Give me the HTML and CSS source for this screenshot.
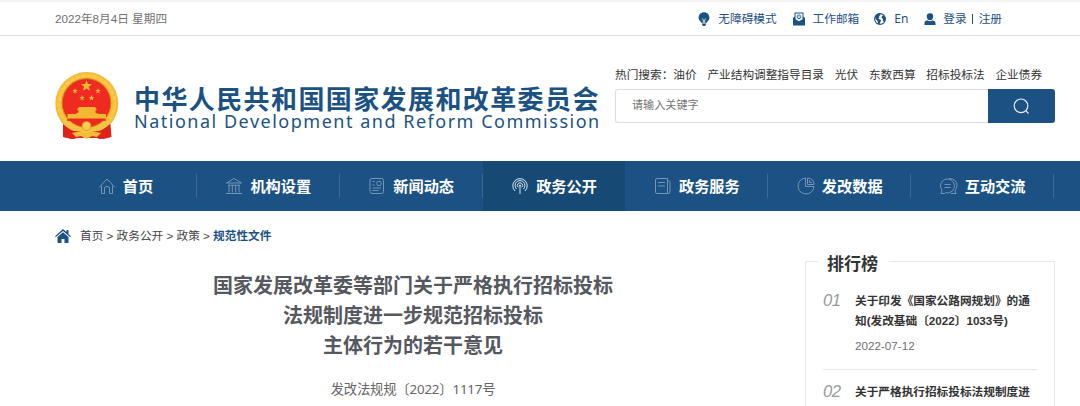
FILE: index.html
```html
<!DOCTYPE html>
<html lang="zh-CN">
<head>
<meta charset="utf-8">
<title>国家发展和改革委员会</title>
<link rel="stylesheet" href="styles.css">
</head>
<body>
<div class="topbar">
  <div class="wrap topbar-row">
    <span class="date">2022年8月4日 星期四</span>
    <div class="tools">
      <a class="tool t-bulb"><svg width="12" height="14" viewBox="0 0 12 14"><path fill="currentColor" d="M6 .3a5.300 5.300 0 0 0-3 9.700l.6 1h4.800l.6-1A5.300 5.300 0 0 0 6 .3zM4 11.500h4v1L7 14H5l-1-1.500z"/><path d="M4.300 6.500 5.300 8v3M7.700 6.500 6.700 8v3" fill="none" stroke="#fff" stroke-width=".8"/></svg><span>无障碍模式</span></a>
      <a class="tool t-mail"><svg width="14" height="14" viewBox="0 0 14 14"><path fill="currentColor" d="M2.500.5h9v4l1.500 1.500v7.500H1V6l1.500-1.500z"/><path fill="#fff" d="M3.500 1.500h7v5.700L7 9.200 3.500 7.200z"/><circle cx="7" cy="4.800" r="1.900" fill="none" stroke="currentColor" stroke-width=".9"/><circle cx="7" cy="4.800" r=".6" fill="currentColor"/></svg><span>工作邮箱</span></a>
      <a class="tool t-globe"><svg width="12" height="12" viewBox="0 0 12 12"><circle cx="6" cy="6" r="5.400" fill="#fff" stroke="currentColor" stroke-width="1.100"/><path fill="currentColor" d="M1 3.500 3.500.8 6 .5l.5 1.300L5 3.200l.6 1.300L4 5.300l1.500 1 1.500.7-.3 1.600L5.500 11 4 11 3.600 8 1.500 6zM8 3l2-.8 1.400 3-.2 2L10 9 8.800 7.500 9 6 7.500 4.800z"/></svg><span>En</span></a>
      <a class="tool t-user"><svg width="12" height="12" viewBox="0 0 12 12"><path fill="currentColor" d="M6 .2a3.200 3.200 0 0 1 3.200 3.300C9.200 5.500 8 7.300 6 7.300S2.800 5.500 2.800 3.500A3.200 3.200 0 0 1 6 .2zM.5 12V9.500Q.5 8 3.500 7.300 6 9.200 8.500 7.300q3 .7 3 2.200V12z"/></svg><span>登录<i class="bar"></i>注册</span></a>
    </div>
  </div>
</div>

<header class="wrap header">
  <svg class="emblem" width="65" height="70" viewBox="0 0 65 70">
    <defs><path id="star" d="M0-1 .235-.324.951-.309.38.124.588.809 0 .4-.588.809-.38.124-.951-.309-.235-.324z"/></defs>
    <path fill="#dc241c" d="M10 48 8.500 66l8 2 7-1h18l7 1 8-2L55 48z"/>
    <path d="m11 57 2 9M17 60v7M54 57l-2 9M48 60v7" stroke="#a91a12" fill="none"/>
    <circle cx="31.800" cy="32.500" r="31.500" fill="#f4bb35"/>
    <circle cx="31.800" cy="32.500" r="28" fill="none" stroke="#f8c94d" stroke-width="3" stroke-dasharray="5 1"/>
    <circle cx="31.500" cy="32" r="24.300" fill="#ee2a22" stroke="#c77d17" stroke-width="1"/>
    <g fill="#f3b832">
      <use href="#star" transform="translate(31.500 15) scale(6)"/>
      <use href="#star" transform="translate(20 20) scale(3)"/>
      <use href="#star" transform="translate(43 20) scale(3)"/>
      <use href="#star" transform="translate(27 27) scale(3)"/>
      <use href="#star" transform="translate(36.500 27) scale(3)"/>
      <path d="M24 36h16l2 2.500-1.500 1V42l2.500.5V43h8v4.500H12.500V43h9v-1l2-.5v-2L22 38.500z"/>
    </g>
    <path d="M12 49h39" stroke="#ee2a22" stroke-width="1.500"/>
    <path d="M14 50q5 7 17.500 7T49 50l5 4q-9 8-22.500 8T9 54z" fill="#f6c443"/>
    <path d="M8 53q9 9 18 7l-7 8-11-2zM55 53q-9 9-18 7l7 8 11-2z" fill="#e02119"/>
    <circle cx="31.500" cy="55" r="4.500" fill="#f8cd50" stroke="#d39121" stroke-width=".8"/>
    <path d="m17 62 9-2 5.500 3 5.500-3 9 2-4 4-5-1-5.500 3-5.500-3-5 1z" fill="#f3bd39"/>
  </svg>
  <div class="names">
    <div class="name-cn">中华人民共和国国家发展和改革委员会</div>
    <div class="name-en">National Development and Reform Commission</div>
  </div>
  <div class="search">
    <div class="hot"><span>热门搜索：油价</span><span>产业结构调整指导目录</span><span>光伏</span><span>东数西算</span><span>招标投标法</span><span>企业债券</span></div>
    <div class="search-row">
      <div class="field">请输入关键字</div>
      <div class="search-btn"><svg width="17" height="17" viewBox="0 0 17 17" fill="none" stroke="#e5edf5" stroke-width="1.200"><circle cx="8" cy="7.800" r="6.800"/><path d="m12.700 12.700 2.800 2.800"/></svg></div>
    </div>
  </div>
</header>

<nav class="nav">
  <div class="nav-row">
    <a class="item"><svg class="ico" viewBox="0 0 18 18"><path d="M1 10.500 9 2l8 8.500M3.500 9v7.500h3V11q0-1.500 2.500-1.500T11.500 11v5.500h3V9"/></svg><span>首页</span></a>
    <a class="item"><svg class="ico" viewBox="0 0 18 18"><path d="M1.500 6 9 1.500 16.500 6zM3 8.200h12M4 8v7.500M7.300 8v7.500M10.700 8v7.500M14 8v7.500M1 16.500h16"/></svg><span>机构设置</span></a>
    <a class="item"><svg class="ico" viewBox="0 0 18 18"><rect x="2" y="1.500" width="13.500" height="15" rx="2"/><circle cx="11" cy="6.500" r="2.300"/><path d="M4.500 4.500h2M4.500 8h2M4.500 11h8.500M4.500 13.500h6"/></svg><span>新闻动态</span></a>
    <a class="item active"><svg class="ico" viewBox="0 0 18 18"><path d="M4 14A7.200 7.200 0 1 1 14 14M5.600 12A4.900 4.900 0 1 1 12.400 12M7.200 10.300a2.600 2.600 0 1 1 3.600 0M9 8.500v8.500"/><circle cx="9" cy="8.500" r=".6"/></svg><span>政务公开</span></a>
    <a class="item"><svg class="ico" viewBox="0 0 18 18"><path d="M13.500 16.500H3q-1.500 0-1.500-1.500V3Q1.500 1.500 3 1.500h10.500zM13.500 4h1.500q1 0 1 1.500V15q0 1.500-2.500 1.500M4 5.500h7M4 9h7"/></svg><span>政务服务</span></a>
    <a class="item"><svg class="ico" viewBox="0 0 18 18"><path d="M8.500 1A8 8 0 1 0 17 9.500M10.500 1v6.500H17Q17 1.500 10.500 1zM8.500 1v8.500H17M12.500 3v2.500H15"/></svg><span>发改数据</span></a>
    <a class="item"><svg class="ico ico-chat" viewBox="0 0 20 18"><path d="M2 16.500l1-3.200A7 7 0 1 1 7 15.800l-1.500.7zM10 1.500Q18 2 18 8.500q0 3-2 5l1 3h-5M5.500 7.500h6M5.500 10.500h6"/></svg><span>互动交流</span></a>
  </div>
</nav>

<div class="wrap main">
  <main class="article">
    <div class="crumbs"><svg width="16" height="14" viewBox="0 0 16 14" fill="currentColor"><path d="M8 0 0 7.200l.9.900L8 1.900l7.100 6.200.9-.9-2.500-2.300V1h-2v2.100z"/><path d="M8 3.200 2.500 8v6h4v-4h3v4h4V8z"/></svg><span>首页 &gt; 政务公开 &gt; 政策 &gt; <b>规范性文件</b></span></div>
    <h1 class="title">国家发展改革委等部门关于严格执行招标投标<br>法规制度进一步规范招标投标<br>主体行为的若干意见</h1>
    <p class="docno">发改法规规〔2022〕1117号</p>
  </main>
  <aside class="rank">
    <h2 class="rank-title">排行榜</h2>
    <div class="entry"><span class="num">01</span><div class="entry-body"><div class="entry-title">关于印发《国家公路网规划》的通<br>知(发改基础〔2022〕1033号)</div><div class="entry-date">2022-07-12</div></div></div>
    <div class="entry"><span class="num">02</span><div class="entry-body"><div class="entry-title">关于严格执行招标投标法规制度进</div></div></div>
  </aside>
</div>
</body>
</html>
```
FILE: styles.css
```css
* { box-sizing: border-box; }
html, body { margin: 0; padding: 0; }
body {
  width: 1080px; height: 406px; overflow: hidden; background: #fff; color: #333;
  font: 11.67px/20px "Liberation Sans", "Noto Sans CJK SC", sans-serif;
}
svg { display: block; flex: none; }
.wrap { width: 1000px; margin-left: 55px; }

.topbar { height: 36px; border-top: 2px solid #f4f4f4; border-bottom: 1px solid #d9dfe6; }
.topbar-row { display: flex; justify-content: space-between; align-items: center; height: 34px; padding-right: 53px; }
.date { color: #707070; }
.tools { display: flex; color: #1c5283; }
.tool { display: flex; align-items: center; }
.t-bulb { gap: 8px; }
.t-mail { gap: 7px; margin-left: 15px; }
.t-globe { gap: 8px; margin-left: 15px; }
.t-user { gap: 7px; margin-left: 16px; }
.t-globe span { font-family: "Noto Sans", sans-serif; font-size: 12px; }
.bar { display: inline-block; width: 1px; height: 10px; margin: 0 5.500px; background: #1c5283; vertical-align: -1px; }

.header { display: flex; height: 125px; }
.emblem { margin-top: 35px; }
.names { width: 480px; margin-left: 14px; padding-top: 48px; color: #1c5283; white-space: nowrap; }
.name-cn { font: bold 26px/28px "Noto Sans CJK SC", sans-serif; letter-spacing: 1.400px; }
.name-en { margin-top: -1px; font: 18px/20px "Noto Sans", sans-serif; letter-spacing: 1.510px; }
.search { width: 440px; margin-left: 1px; padding-top: 29px; }
.hot { display: flex; gap: 10.800px; white-space: nowrap; }
.search-row { display: flex; height: 34px; margin-top: 4px; }
.field { flex: 1; padding: 0 16px; border: 1px solid #dedede; border-right: 0; border-radius: 3px 0 0 3px; color: #757575; font-size: 11.100px; line-height: 31px; }
.search-btn { display: flex; align-items: center; justify-content: center; width: 67px; background: #1c5283; border-radius: 0 3px 3px 0; }

.nav { height: 50px; background: #1c5283; }
.nav-row { display: flex; width: 1000px; height: 50px; margin-left: 54px; }
.item {
  display: flex; flex: 1; align-items: center; justify-content: center; gap: 7px;
  color: #fff; font: bold 15.200px/22px "Noto Sans CJK SC", sans-serif; white-space: nowrap;
  background: linear-gradient(#3a6b97, #3a6b97) right center / 1px 24px no-repeat;
}
.item span { padding-bottom: 3px; }
.item.active { background: #174975; }
.ico { width: 18px; height: 18px; fill: none; stroke: #7396b6; stroke-width: 1; }
.ico-chat { width: 20px; margin: 0 -1px; }
.active .ico { stroke: #dce6ee; }

.main { display: flex; justify-content: space-between; height: 195px; overflow: hidden; }
.article { width: 716px; }
.crumbs { display: flex; align-items: center; gap: 9px; height: 50px; color: #444; }
.crumbs svg, .crumbs b { color: #1c5283; }
.title { margin: 9px 0 0; font: bold 20px/30px "Noto Sans CJK SC", sans-serif; text-align: center; color: #55585f; }
.docno { margin: 19px 0 0; text-align: center; color: #666; font: 13.330px/20px "Noto Sans", "Noto Sans CJK SC", sans-serif; letter-spacing: -.18px; }

.rank { width: 250px; height: 145px; margin-top: 50px; padding: 0 17px; border: 1px solid #e9e9e9; border-bottom: 0; }
.rank-title { width: 71px; margin: -11px 0 16px -5px; padding-left: 9px; background: #fff; color: #333; font: bold 17px/24px "Noto Sans CJK SC", sans-serif; }
.entry { display: flex; }
.entry + .entry { margin-top: 13px; padding-top: 12px; border-top: 1px solid #e9e9e9; }
.num { width: 32px; color: #999; font: italic 16.670px/20px "Liberation Sans", sans-serif; letter-spacing: -.5px; }
.entry-title { font-weight: bold; color: #333; white-space: nowrap; }
.entry-date { margin-top: 5px; color: #707070; }
```
